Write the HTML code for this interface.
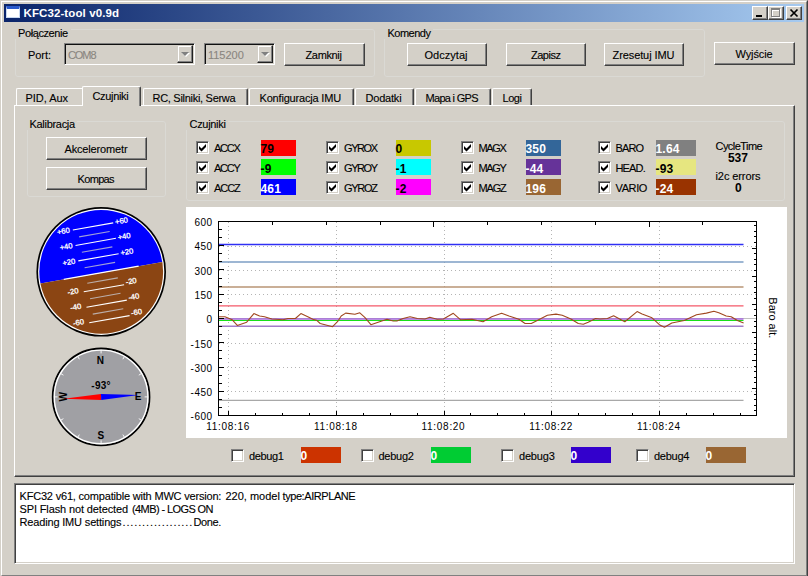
<!DOCTYPE html>
<html lang="pl"><head><meta charset="utf-8"><title>KFC32-tool v0.9d</title>
<style>
html,body{margin:0;padding:0}
body{width:808px;height:576px;overflow:hidden;background:#d4d0c8;font-family:"Liberation Sans",sans-serif;font-size:11px;color:#000;position:relative}
#win{position:absolute;left:0;top:0;width:808px;height:577px;box-sizing:border-box;background:#d4d0c8;border:1px solid;border-color:#d4d0c8 #404040 #404040 #d4d0c8;overflow:hidden}
#win:before{content:"";position:absolute;left:0;top:0;right:0;bottom:0;border:1px solid;border-color:#fff #808080 #808080 #fff}
#c{position:absolute;left:-1px;top:-1px;width:808px;height:576px}
#c div,#c span,#c svg.abs{position:absolute;box-sizing:border-box}
.titlebar{left:4px;top:4px;width:800px;height:18px;background:linear-gradient(90deg,#0a246a 0%,#a6caf0 100%)}
.appicon{left:2px;top:2px;width:14px;height:12px;background:#fff;border:1px solid #c8d8f0;border-top:3px solid #2a5acc}
.tb{top:2px;width:16px;height:14px;background:#d4d0c8;border:1px solid;border-color:#fff #404040 #404040 #fff;box-shadow:inset -1px -1px 0 #808080}
.tb svg{position:absolute;left:1px;top:1px}
.t{white-space:pre;line-height:13px;height:13px;-webkit-text-stroke:0.12px}
.tt{color:#fff}
.dis{color:#8a8680}
.b{font-weight:bold;-webkit-text-stroke:0}
.grp{border:1px solid #dad9d4;border-radius:3px}
.gl{background:#d4d0c8}
.btn{background:#d4d0c8;border:1px solid;border-color:#fff #404040 #404040 #fff;box-shadow:inset -1px -1px 0 #808080}
.combo{height:22px;background:#d4d0c8;border:1px solid;border-color:#808080 #fff #fff #808080;box-shadow:inset 1px 1px 0 #101010,inset -1px -1px 0 #d4d0c8}
.dd{right:1px;top:1px;width:16px;height:18px;background:#d4d0c8;border:1px solid;border-color:#d4d0c8 #202020 #202020 #d4d0c8;box-shadow:inset -1px -1px 0 #808080,inset 1px 1px 0 #fff}
.dd i,.dd b{position:absolute;width:0;height:0;border:4px solid transparent;border-bottom:0}
.dd i{left:4px;top:7px;border-top:4px solid #fff}
.dd b{left:3px;top:6px;border-top:4px solid #808080}
.pane{border:1px solid;border-color:#fff #404040 #404040 #fff;box-shadow:inset -1px -1px 0 #808080}
.tab{background:#d4d0c8;border:1px solid;border-color:#fff #404040 transparent #fff;border-bottom:0;border-radius:2px 2px 0 0;box-shadow:inset -1px 0 0 #808080}
.tab.sel{border-bottom:0}
.tab.nr{border-right:0;box-shadow:none;border-radius:2px 0 0 0}
.chk{background:#fff;border:1px solid;border-color:#808080 #fff #fff #808080;box-shadow:inset 1px 1px 0 #404040,inset -1px -1px 0 #d4d0c8}
.chk svg{position:absolute;left:2px;top:2px}
.val{}
.log{background:#fff;border:1px solid;border-color:#808080 #fff #fff #808080;box-shadow:inset 1px 1px 0 #404040,inset -1px -1px 0 #d4d0c8}
</style></head>
<body><div id="win"><div id="c">
<div class="titlebar">
<div class="appicon"><i></i></div>
<div class="tb" style="left:748px"><svg width="12" height="10" viewBox="0 0 12 10"><rect x="2" y="7" width="6" height="2" fill="#000"/></svg></div>
<div class="tb" style="left:764px"><svg width="12" height="10" viewBox="0 0 12 10"><rect x="2.5" y="1.5" width="8" height="8" fill="none" stroke="#fff"/><rect x="2" y="1" width="9" height="2" fill="#fff"/><rect x="1.5" y="0.5" width="8" height="8" fill="none" stroke="#808080"/><rect x="1" y="0" width="9" height="2" fill="#808080"/></svg></div>
<div class="tb" style="left:782px"><svg width="12" height="10" viewBox="0 0 12 10"><path d="M2.5 1.5 L9.5 8.5 M9.5 1.5 L2.5 8.5" stroke="#000" stroke-width="1.7" fill="none"/></svg></div>
</div>
<span class="t tt b" style="left:23.5px;top:7px;letter-spacing:0.101px;font-size:11.5px;">KFC32-tool v0.9d</span>
<div class="grp" style="left:15px;top:29px;width:360px;height:48px;"></div>
<div class="gl" style="left:15px;top:26px;width:56px;height:13px"></div>
<span class="t" style="left:18px;top:27px;letter-spacing:-0.403px;">Połączenie</span>
<span class="t" style="left:28px;top:49px;letter-spacing:-0.052px;">Port:</span>
<div class="combo" style="left:64px;top:43px;width:131px"><div class="dd"><i></i><b></b></div></div>
<span class="t dis" style="left:68px;top:49px;letter-spacing:-1.080px;">COM8</span>
<div class="combo" style="left:204px;top:43px;width:71px"><div class="dd"><i></i><b></b></div></div>
<span class="t dis" style="left:208px;top:49px;letter-spacing:-0.026px;">115200</span>
<div class="btn" style="left:284px;top:43px;width:81px;height:23px;"></div>
<span class="t" style="left:305.5px;top:49px;letter-spacing:-0.349px;">Zamknij</span>
<div class="grp" style="left:384px;top:29px;width:321px;height:48px;"></div>
<div class="gl" style="left:384px;top:26px;width:49px;height:13px"></div>
<span class="t" style="left:387.5px;top:27px;letter-spacing:-0.498px;">Komendy</span>
<div class="btn" style="left:407px;top:43px;width:80px;height:23px;"></div>
<span class="t" style="left:424.5px;top:49px;letter-spacing:0.027px;">Odczytaj</span>
<div class="btn" style="left:506px;top:43px;width:80px;height:23px;"></div>
<span class="t" style="left:531px;top:49px;letter-spacing:-0.483px;">Zapisz</span>
<div class="btn" style="left:604px;top:43px;width:80px;height:23px;"></div>
<span class="t" style="left:612.5px;top:49px;letter-spacing:-0.093px;">Zresetuj IMU</span>
<div class="btn" style="left:714px;top:42px;width:81px;height:23px;"></div>
<span class="t" style="left:735.5px;top:48px;letter-spacing:-0.107px;">Wyjście</span>
<div class="pane" style="left:14px;top:105px;width:781px;height:372px;"></div>
<div class="tab nr" style="left:16px;top:88px;width:66px;height:17px;"></div>
<span class="t" style="left:25.5px;top:92px;letter-spacing:-0.040px;">PID, Aux</span>
<div class="tab sel" style="left:82px;top:86px;width:59px;height:20px;"></div>
<span class="t" style="left:92.5px;top:90px;letter-spacing:-0.335px;">Czujniki</span>
<div class="tab" style="left:143px;top:88px;width:105px;height:17px;"></div>
<span class="t" style="left:152.5px;top:92px;letter-spacing:-0.287px;">RC, Silniki, Serwa</span>
<div class="tab" style="left:249px;top:88px;width:105px;height:17px;"></div>
<span class="t" style="left:259.5px;top:92px;letter-spacing:-0.185px;">Konfiguracja IMU</span>
<div class="tab" style="left:355px;top:88px;width:59px;height:17px;"></div>
<span class="t" style="left:365.5px;top:92px;letter-spacing:-0.200px;">Dodatki</span>
<div class="tab" style="left:415px;top:88px;width:76px;height:17px;"></div>
<span class="t" style="left:425.5px;top:92px;letter-spacing:-0.691px;">Mapa i GPS</span>
<div class="tab" style="left:492px;top:88px;width:40px;height:17px;"></div>
<span class="t" style="left:502.5px;top:92px;letter-spacing:-0.442px;">Logi</span>
<div class="grp" style="left:27px;top:121px;width:139px;height:76px;"></div>
<div class="gl" style="left:27px;top:117px;width:50px;height:13px"></div>
<span class="t" style="left:29.5px;top:118px;letter-spacing:-0.296px;">Kalibracja</span>
<div class="btn" style="left:46px;top:137px;width:101px;height:23px;"></div>
<span class="t" style="left:64.5px;top:143px;letter-spacing:-0.156px;">Akcelerometr</span>
<div class="btn" style="left:46px;top:167px;width:101px;height:23px;"></div>
<span class="t" style="left:77.5px;top:173px;letter-spacing:-0.656px;">Kompas</span>
<div class="grp" style="left:186px;top:121px;width:599px;height:80px;"></div>
<div class="gl" style="left:186px;top:117px;width:42px;height:13px"></div>
<span class="t" style="left:189.5px;top:118px;letter-spacing:-0.302px;">Czujniki</span>
<div class="chk" style="left:196px;top:141px;width:13px;height:13px;"><svg width="7" height="8" viewBox="0 0 7 8"><path d="M0 2 L2.5 4.5 L7 0 L7 3 L2.5 7.5 L0 5 Z" fill="#000"/></svg></div>
<span class="t" style="left:214px;top:142px;letter-spacing:-1.218px;">ACCX</span>
<div class="val" style="left:261px;top:140px;width:35px;height:16px;background:#ff0000"></div>
<span class="t b" style="left:260.5px;top:143px;letter-spacing:0.2px;font-size:12px;color:#000;">79</span>
<div class="chk" style="left:196px;top:161px;width:13px;height:13px;"><svg width="7" height="8" viewBox="0 0 7 8"><path d="M0 2 L2.5 4.5 L7 0 L7 3 L2.5 7.5 L0 5 Z" fill="#000"/></svg></div>
<span class="t" style="left:214px;top:162px;letter-spacing:-1.218px;">ACCY</span>
<div class="val" style="left:261px;top:159px;width:35px;height:16px;background:#00ff00"></div>
<span class="t b" style="left:260.5px;top:163px;letter-spacing:0.2px;font-size:12px;color:#000;">-9</span>
<div class="chk" style="left:196px;top:181px;width:13px;height:13px;"><svg width="7" height="8" viewBox="0 0 7 8"><path d="M0 2 L2.5 4.5 L7 0 L7 3 L2.5 7.5 L0 5 Z" fill="#000"/></svg></div>
<span class="t" style="left:214px;top:182px;letter-spacing:-1.044px;">ACCZ</span>
<div class="val" style="left:261px;top:179px;width:35px;height:16px;background:#0000ff"></div>
<span class="t b" style="left:260.5px;top:183px;letter-spacing:0.2px;font-size:12px;color:#fff;">461</span>
<div class="chk" style="left:326px;top:141px;width:13px;height:13px;"><svg width="7" height="8" viewBox="0 0 7 8"><path d="M0 2 L2.5 4.5 L7 0 L7 3 L2.5 7.5 L0 5 Z" fill="#000"/></svg></div>
<span class="t" style="left:344px;top:142px;letter-spacing:-1.430px;">GYROX</span>
<div class="val" style="left:396px;top:140px;width:35px;height:16px;background:#c8c800"></div>
<span class="t b" style="left:395.5px;top:143px;letter-spacing:0.2px;font-size:12px;color:#000;">0</span>
<div class="chk" style="left:326px;top:161px;width:13px;height:13px;"><svg width="7" height="8" viewBox="0 0 7 8"><path d="M0 2 L2.5 4.5 L7 0 L7 3 L2.5 7.5 L0 5 Z" fill="#000"/></svg></div>
<span class="t" style="left:344px;top:162px;letter-spacing:-1.430px;">GYROY</span>
<div class="val" style="left:396px;top:159px;width:35px;height:16px;background:#00ffff"></div>
<span class="t b" style="left:395.5px;top:163px;letter-spacing:0.2px;font-size:12px;color:#000;">-1</span>
<div class="chk" style="left:326px;top:181px;width:13px;height:13px;"><svg width="7" height="8" viewBox="0 0 7 8"><path d="M0 2 L2.5 4.5 L7 0 L7 3 L2.5 7.5 L0 5 Z" fill="#000"/></svg></div>
<span class="t" style="left:344px;top:182px;letter-spacing:-1.294px;">GYROZ</span>
<div class="val" style="left:396px;top:179px;width:35px;height:16px;background:#ff00ff"></div>
<span class="t b" style="left:395.5px;top:183px;letter-spacing:0.2px;font-size:12px;color:#000;">-2</span>
<div class="chk" style="left:461px;top:141px;width:13px;height:13px;"><svg width="7" height="8" viewBox="0 0 7 8"><path d="M0 2 L2.5 4.5 L7 0 L7 3 L2.5 7.5 L0 5 Z" fill="#000"/></svg></div>
<span class="t" style="left:478.5px;top:142px;letter-spacing:-1.345px;">MAGX</span>
<div class="val" style="left:526px;top:140px;width:35px;height:16px;background:#336699"></div>
<span class="t b" style="left:525.5px;top:143px;letter-spacing:0.2px;font-size:12px;color:#fff;">350</span>
<div class="chk" style="left:461px;top:161px;width:13px;height:13px;"><svg width="7" height="8" viewBox="0 0 7 8"><path d="M0 2 L2.5 4.5 L7 0 L7 3 L2.5 7.5 L0 5 Z" fill="#000"/></svg></div>
<span class="t" style="left:478.5px;top:162px;letter-spacing:-1.345px;">MAGY</span>
<div class="val" style="left:526px;top:159px;width:35px;height:16px;background:#663399"></div>
<span class="t b" style="left:525.5px;top:163px;letter-spacing:0.2px;font-size:12px;color:#fff;">-44</span>
<div class="chk" style="left:461px;top:181px;width:13px;height:13px;"><svg width="7" height="8" viewBox="0 0 7 8"><path d="M0 2 L2.5 4.5 L7 0 L7 3 L2.5 7.5 L0 5 Z" fill="#000"/></svg></div>
<span class="t" style="left:478.5px;top:182px;letter-spacing:-1.166px;">MAGZ</span>
<div class="val" style="left:526px;top:179px;width:35px;height:16px;background:#996633"></div>
<span class="t b" style="left:525.5px;top:183px;letter-spacing:0.2px;font-size:12px;color:#fff;">196</span>
<div class="chk" style="left:598px;top:141px;width:13px;height:13px;"><svg width="7" height="8" viewBox="0 0 7 8"><path d="M0 2 L2.5 4.5 L7 0 L7 3 L2.5 7.5 L0 5 Z" fill="#000"/></svg></div>
<span class="t" style="left:615.5px;top:142px;letter-spacing:-0.882px;">BARO</span>
<div class="val" style="left:656px;top:140px;width:40px;height:16px;background:#808080"></div>
<span class="t b" style="left:655.5px;top:143px;letter-spacing:0.2px;font-size:12px;color:#fff;">1.64</span>
<div class="chk" style="left:598px;top:161px;width:13px;height:13px;"><svg width="7" height="8" viewBox="0 0 7 8"><path d="M0 2 L2.5 4.5 L7 0 L7 3 L2.5 7.5 L0 5 Z" fill="#000"/></svg></div>
<span class="t" style="left:615.5px;top:162px;letter-spacing:-0.850px;">HEAD.</span>
<div class="val" style="left:656px;top:159px;width:40px;height:16px;background:#e6e680"></div>
<span class="t b" style="left:655.5px;top:163px;letter-spacing:0.2px;font-size:12px;color:#000;">-93</span>
<div class="chk" style="left:598px;top:181px;width:13px;height:13px;"><svg width="7" height="8" viewBox="0 0 7 8"><path d="M0 2 L2.5 4.5 L7 0 L7 3 L2.5 7.5 L0 5 Z" fill="#000"/></svg></div>
<span class="t" style="left:615.5px;top:182px;letter-spacing:-0.383px;">VARIO</span>
<div class="val" style="left:656px;top:179px;width:40px;height:16px;background:#993300"></div>
<span class="t b" style="left:655.5px;top:183px;letter-spacing:0.2px;font-size:12px;color:#fff;">-24</span>
<span class="t" style="left:715.5px;top:140px;letter-spacing:-0.547px;">CycleTime</span>
<span class="t b" style="left:728px;top:152px;letter-spacing:-0.093px;font-size:12px;">537</span>
<span class="t" style="left:715.5px;top:170px;letter-spacing:-0.089px;">i2c errors</span>
<span class="t b" style="left:735px;top:182px;font-size:12px;">0</span>
<div class="chk" style="left:231px;top:449px;width:13px;height:13px;"></div>
<span class="t" style="left:249px;top:450px;letter-spacing:-0.385px;">debug1</span>
<div class="val" style="left:301px;top:447px;width:40px;height:16px;background:#cc3300"></div>
<span class="t b" style="left:300.5px;top:450px;font-size:12px;color:#fff;">0</span>
<div class="chk" style="left:361px;top:449px;width:13px;height:13px;"></div>
<span class="t" style="left:378.5px;top:450px;letter-spacing:-0.258px;">debug2</span>
<div class="val" style="left:431px;top:447px;width:40px;height:16px;background:#00cc33"></div>
<span class="t b" style="left:430.5px;top:450px;font-size:12px;color:#fff;">0</span>
<div class="chk" style="left:501px;top:449px;width:13px;height:13px;"></div>
<span class="t" style="left:519px;top:450px;letter-spacing:-0.185px;">debug3</span>
<div class="val" style="left:571px;top:447px;width:40px;height:16px;background:#3300cc"></div>
<span class="t b" style="left:570.5px;top:450px;font-size:12px;color:#fff;">0</span>
<div class="chk" style="left:636px;top:449px;width:13px;height:13px;"></div>
<span class="t" style="left:654px;top:450px;letter-spacing:-0.267px;">debug4</span>
<div class="val" style="left:706px;top:447px;width:40px;height:16px;background:#996633"></div>
<span class="t b" style="left:705.5px;top:450px;font-size:12px;color:#fff;">0</span>
<div class="log" style="left:14px;top:483px;width:781px;height:81px;"></div>
<span class="t" style="left:19.5px;top:490px;letter-spacing:-0.189px;">KFC32 v61, compatible with MWC version:</span>
<span class="t" style="left:225.5px;top:490px;letter-spacing:-0.004px;">220, model</span>
<span class="t" style="left:282.5px;top:490px;letter-spacing:-0.421px;">type:AIRPLANE</span>
<span class="t" style="left:19.5px;top:503px;letter-spacing:-0.130px;">SPI Flash not detected</span>
<span class="t" style="left:132px;top:503px;letter-spacing:-0.596px;">(4MB) - LOGS ON</span>
<span class="t" style="left:19.5px;top:516px;letter-spacing:-0.163px;">Reading IMU settings</span>
<span class="t" style="left:122.5px;top:516px;letter-spacing:0.868px;">..................</span>
<span class="t" style="left:193.5px;top:516px;letter-spacing:-0.369px;">Done.</span>
<svg class="abs" style="left:186px;top:207px" width="601" height="231" viewBox="186 207 601 231" font-family="Liberation Sans, sans-serif" font-size="11">
<rect x="186" y="207" width="601" height="231" fill="#fff"/>
<path d="M218.5 246.5 H756.5 M218.5 270.5 H756.5 M218.5 294.5 H756.5 M218.5 343.5 H756.5 M218.5 367.5 H756.5 M218.5 391.5 H756.5 M228.5 221.5 V415.5 M336.5 221.5 V415.5 M444.5 221.5 V415.5 M551.5 221.5 V415.5 M659.5 221.5 V415.5" stroke="#b4b4b4" stroke-width="1" stroke-dasharray="1 3" fill="none" shape-rendering="crispEdges"/>
<path d="M218.5 318.6 H756.5" stroke="#c0c0c0" stroke-width="1" shape-rendering="crispEdges"/>
<path d="M218.5 400.3 H743.5" stroke="#a8a8a8" stroke-width="1.2" opacity="1" fill="none"/>
<path d="M218.5 244.5 H743.5" stroke="#3030f4" stroke-width="1.4" opacity="1" fill="none"/>
<path d="M218.5 262 H743.5" stroke="#7c9ec4" stroke-width="1.5" opacity="1" fill="none"/>
<path d="M218.5 286.9 H743.5" stroke="#b89474" stroke-width="1.5" opacity="1" fill="none"/>
<path d="M218.5 305.9 H743.5" stroke="#f45868" stroke-width="1.3" opacity="1" fill="none"/>
<path d="M218.5 326.2 H743.5" stroke="#a27cc8" stroke-width="1.5" opacity="1" fill="none"/>
<path d="M218.5 319 H743.5" stroke="#a468dc" stroke-width="1.7" opacity="1" fill="none"/>
<path d="M218.5 320.5 H743.5" stroke="#18e018" stroke-width="1.2" opacity="1" fill="none"/>
<polyline points="218.5,316.8 224.9,316.8 232.3,319.8 237.3,325.4 246.7,322.2 253.9,313.6 259.6,316 264.5,316.8 271.9,319 283,319.8 288,318.5 295.4,318.5 300.9,313.6 307.8,316.8 312.8,319.3 316.5,320.2 320.2,323.5 332.6,326.7 337.5,321.7 341.2,316 345.7,313.1 354.9,314.3 359.8,312.8 364.8,317.3 370.9,324.7 379.6,321.7 387,319.3 393.2,321 396.9,321 403.1,318.5 410,316.8 417.4,318.5 424.9,319 429.8,317.3 437.2,319.3 443.4,319 453.3,313.3 460.7,319.8 471.9,319.3 483,321.7 491.7,316.8 501.6,313.3 509,316 518.9,319.3 525.1,323.5 531.3,323.5 538.7,319.8 547.4,315.3 556,314.1 562.2,315.3 570.9,319 578.3,323.5 583.3,324.2 588.2,322.2 595.6,318.5 600,319 607.4,318.5 613.6,315.8 624.8,321.7 637.1,311.6 642.1,314.1 652,317.8 659.4,324.7 664.4,327.2 671.8,323 684.2,320.5 696.5,314.8 706.4,313.1 713.9,311.3 718.8,312.8 726.2,316 731.2,316.8 737.4,320.5 743.6,323" stroke="#a04820" stroke-width="1.1" fill="none" stroke-linejoin="round"/>
<rect x="218.5" y="221.5" width="538" height="194" fill="none" stroke="#000" stroke-width="1" shape-rendering="crispEdges"/>
<path d="M218.5 221.5 h5 M218.5 229.5 h3 M218.5 237.5 h3 M218.5 245.5 h5 M218.5 253.5 h3 M218.5 261.5 h3 M218.5 269.5 h5 M218.5 278.5 h3 M218.5 286.5 h3 M218.5 294.5 h5 M218.5 302.5 h3 M218.5 310.5 h3 M218.5 318.5 h5 M218.5 326.5 h3 M218.5 334.5 h3 M218.5 342.5 h5 M218.5 350.5 h3 M218.5 358.5 h3 M218.5 367.5 h5 M218.5 375.5 h3 M218.5 383.5 h3 M218.5 391.5 h5 M218.5 399.5 h3 M218.5 407.5 h3 M218.5 415.5 h5 M756.5 225.5 h-3 M756.5 231.5 h-3 M756.5 236.5 h-3 M756.5 242.5 h-3 M756.5 248.5 h-5 M756.5 253.5 h-3 M756.5 259.5 h-3 M756.5 264.5 h-3 M756.5 270.5 h-3 M756.5 276.5 h-5 M756.5 281.5 h-3 M756.5 287.5 h-3 M756.5 292.5 h-3 M756.5 298.5 h-3 M756.5 304.5 h-5 M756.5 309.5 h-3 M756.5 315.5 h-3 M756.5 321.5 h-3 M756.5 326.5 h-3 M756.5 332.5 h-5 M756.5 337.5 h-3 M756.5 343.5 h-3 M756.5 349.5 h-3 M756.5 354.5 h-3 M756.5 360.5 h-5 M756.5 366.5 h-3 M756.5 371.5 h-3 M756.5 377.5 h-3 M756.5 382.5 h-3 M756.5 388.5 h-5 M756.5 394.5 h-3 M756.5 399.5 h-3 M756.5 405.5 h-3 M756.5 410.5 h-3 M228.5 415.5 v-5 M255.5 415.5 v-3 M282.5 415.5 v-3 M309.5 415.5 v-3 M336.5 415.5 v-5 M363.5 415.5 v-3 M390.5 415.5 v-3 M417.5 415.5 v-3 M444.5 415.5 v-5 M470.5 415.5 v-3 M497.5 415.5 v-3 M524.5 415.5 v-3 M551.5 415.5 v-5 M578.5 415.5 v-3 M605.5 415.5 v-3 M632.5 415.5 v-3 M659.5 415.5 v-5 M686.5 415.5 v-3 M713.5 415.5 v-3 M740.5 415.5 v-3 M272.5 221.5 v3 M326.5 221.5 v3 M380.5 221.5 v3 M433.5 221.5 v5 M487.5 221.5 v3 M541.5 221.5 v3 M595.5 221.5 v3 M649.5 221.5 v5 M702.5 221.5 v3" stroke="#000" stroke-width="1" fill="none" shape-rendering="crispEdges"/>
<text x="212.6" y="226.22" text-anchor="end" font-size="10" letter-spacing="0.5">600</text>
<text x="212.6" y="250.49" text-anchor="end" font-size="10" letter-spacing="0.5">450</text>
<text x="212.6" y="274.76" text-anchor="end" font-size="10" letter-spacing="0.5">300</text>
<text x="212.6" y="299.03" text-anchor="end" font-size="10" letter-spacing="0.5">150</text>
<text x="212.6" y="323.3" text-anchor="end" font-size="10" letter-spacing="0.5">0</text>
<text x="212.6" y="347.57" text-anchor="end" font-size="10" letter-spacing="0.5">-150</text>
<text x="212.6" y="371.84" text-anchor="end" font-size="10" letter-spacing="0.5">-300</text>
<text x="212.6" y="396.11" text-anchor="end" font-size="10" letter-spacing="0.5">-450</text>
<text x="212.6" y="420.38" text-anchor="end" font-size="10" letter-spacing="0.5">-600</text>
<text x="228.1" y="429.6" text-anchor="middle" font-size="10" letter-spacing="0.7">11:08:16</text>
<text x="335.8" y="429.6" text-anchor="middle" font-size="10" letter-spacing="0.7">11:08:18</text>
<text x="443.5" y="429.6" text-anchor="middle" font-size="10" letter-spacing="0.7">11:08:20</text>
<text x="551.2" y="429.6" text-anchor="middle" font-size="10" letter-spacing="0.7">11:08:22</text>
<text x="658.9" y="429.6" text-anchor="middle" font-size="10" letter-spacing="0.7">11:08:24</text>
<text transform="translate(769 297.3) rotate(90)">Baro alt.</text>
</svg>
<svg class="abs" style="left:30px;top:202px" width="142" height="140" viewBox="30 202 142 140" font-family="Liberation Sans, sans-serif">
<defs><clipPath id="hc"><circle cx="101.2" cy="271.8" r="61.9"/></clipPath></defs>
<circle cx="101.2" cy="271.8" r="64.8" fill="#000"/>
<circle cx="101.2" cy="271.8" r="63.1" fill="#fff"/>
<g clip-path="url(#hc)"><g transform="translate(101.2 272.8) rotate(-10)">
<rect x="-90" y="-90" width="180" height="90" fill="#0000ff"/>
<rect x="-90" y="0" width="180" height="90" fill="#8b4513"/>
<path d="M-38 0 H38" stroke="#fff" stroke-width="1.2"/>
<path d="M-20.5 15.7 H20.5" stroke="#fff" stroke-width="1.1"/>
<path d="M-15.5 7.85 H15.5" stroke="#c8c8d0" stroke-width="1.1" opacity=".8"/>
<text x="-36.5" y="16.1" font-size="7.6" fill="#fff" stroke="#fff" stroke-width=".3">-20</text>
<text x="22.5" y="16.1" font-size="7.6" fill="#fff" stroke="#fff" stroke-width=".3">-20</text>
<path d="M-20.5 -15.7 H20.5" stroke="#fff" stroke-width="1.1"/>
<path d="M-15.5 -7.85 H15.5" stroke="#c8c8d0" stroke-width="1.1" opacity=".8"/>
<text x="-36.5" y="-13.7" font-size="7.6" fill="#fff" stroke="#fff" stroke-width=".3">+20</text>
<text x="22.5" y="-13.7" font-size="7.6" fill="#fff" stroke="#fff" stroke-width=".3">+20</text>
<path d="M-20.5 31.4 H20.5" stroke="#fff" stroke-width="1.1"/>
<path d="M-15.5 23.55 H15.5" stroke="#c8c8d0" stroke-width="1.1" opacity=".8"/>
<text x="-36.5" y="31.8" font-size="7.6" fill="#fff" stroke="#fff" stroke-width=".3">-40</text>
<text x="22.5" y="31.8" font-size="7.6" fill="#fff" stroke="#fff" stroke-width=".3">-40</text>
<path d="M-20.5 -31.4 H20.5" stroke="#fff" stroke-width="1.1"/>
<path d="M-15.5 -23.55 H15.5" stroke="#c8c8d0" stroke-width="1.1" opacity=".8"/>
<text x="-36.5" y="-29.4" font-size="7.6" fill="#fff" stroke="#fff" stroke-width=".3">+40</text>
<text x="22.5" y="-29.4" font-size="7.6" fill="#fff" stroke="#fff" stroke-width=".3">+40</text>
<path d="M-20.5 47.1 H20.5" stroke="#fff" stroke-width="1.1"/>
<path d="M-15.5 39.25 H15.5" stroke="#c8c8d0" stroke-width="1.1" opacity=".8"/>
<text x="-36.5" y="47.5" font-size="7.6" fill="#fff" stroke="#fff" stroke-width=".3">-60</text>
<text x="22.5" y="47.5" font-size="7.6" fill="#fff" stroke="#fff" stroke-width=".3">-60</text>
<path d="M-20.5 -47.1 H20.5" stroke="#fff" stroke-width="1.1"/>
<path d="M-15.5 -39.25 H15.5" stroke="#c8c8d0" stroke-width="1.1" opacity=".8"/>
<text x="-36.5" y="-45.1" font-size="7.6" fill="#fff" stroke="#fff" stroke-width=".3">+60</text>
<text x="22.5" y="-45.1" font-size="7.6" fill="#fff" stroke="#fff" stroke-width=".3">+60</text>
</g></g>
</svg>
<svg class="abs" style="left:46px;top:342px" width="110" height="110" viewBox="46 342 110 110" font-family="Liberation Sans, sans-serif" font-weight="bold" font-size="10">
<circle cx="101.1" cy="396.9" r="48.4" fill="#a0a0a4" stroke="#000" stroke-width="1.8"/>
<circle cx="101.1" cy="396.9" r="46.8" fill="none" stroke="#fff" stroke-width="1.4"/>
<path d="M101.1 353.4 L101.1 349.9 M122.85 359.228 L124.6 356.197 M138.772 375.15 L141.803 373.4 M144.6 396.9 L148.1 396.9 M138.772 418.65 L141.803 420.4 M122.85 434.572 L124.6 437.603 M101.1 440.4 L101.1 443.9 M79.35 434.572 L77.6 437.603 M63.4279 418.65 L60.3968 420.4 M57.6 396.9 L54.1 396.9 M63.4279 375.15 L60.3968 373.4 M79.35 359.228 L77.6 356.197" stroke="#fff" stroke-width="1" opacity=".9"/>
<text x="100.3" y="363.8" text-anchor="middle">N</text>
<text x="100.8" y="438.8" text-anchor="middle">S</text>
<text x="138" y="400.4" text-anchor="middle">E</text>
<text transform="translate(66.8 396.9) rotate(-90)" text-anchor="middle">W</text>
<text x="101.1" y="388.8" text-anchor="middle" letter-spacing="0.3">-93°</text>
<path d="M63.6514 398.863 L100.943 393.904 L101.257 399.896 Z" fill="#ff0000"/>
<path d="M138.549 394.937 L100.943 393.904 L101.257 399.896 Z" fill="#0000ff"/>
</svg>
</div></div></body></html>
